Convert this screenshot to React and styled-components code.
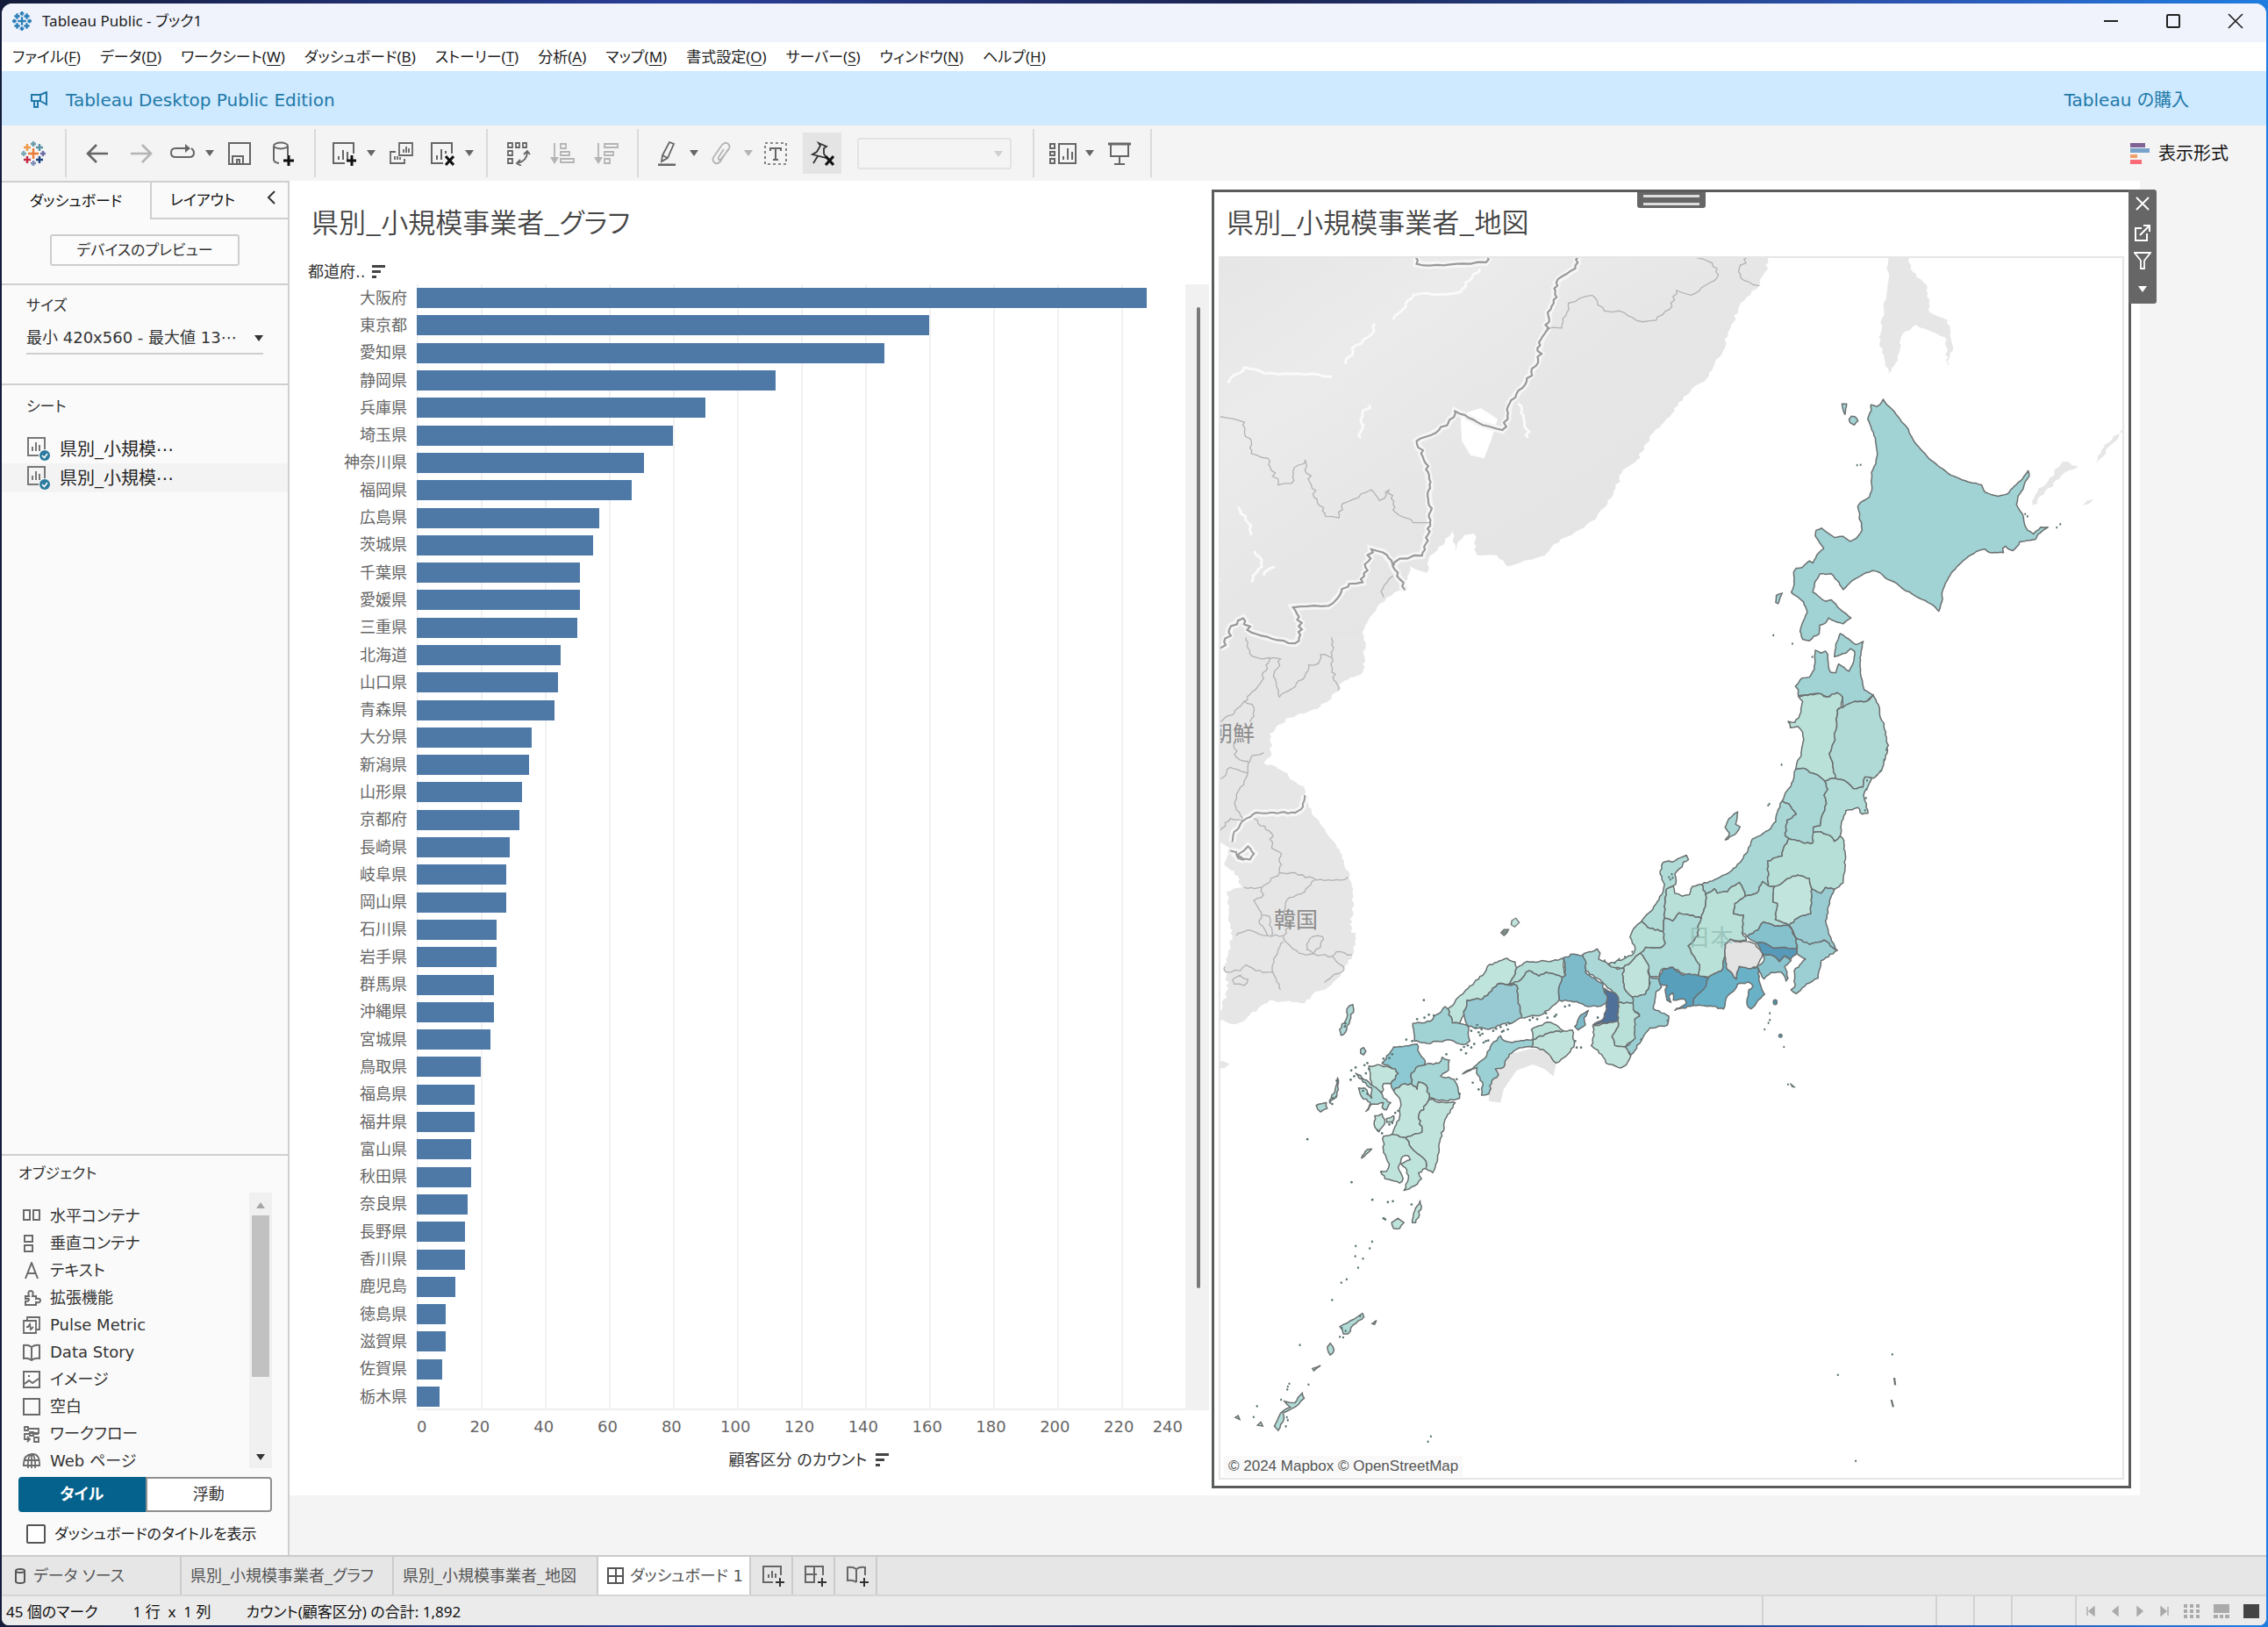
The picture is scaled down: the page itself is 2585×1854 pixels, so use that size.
import React from "react";
import styled, { createGlobalStyle, css } from "styled-components";

const uiFont = `"Noto Sans", "Noto Sans CJK JP", sans-serif`;
const paneFont = `"DejaVu Sans", "Noto Sans CJK JP", sans-serif`;
const line = "#cfcfcf";

const GlobalStyle = createGlobalStyle`
  *, *::before, *::after { box-sizing: border-box; }
  body { margin: 0; }
  button, input, select { font: inherit; color: inherit; font-feature-settings: inherit; }
  button { background: none; border: 0; padding: 0; }
  ul { list-style: none; margin: 0; padding: 0; }
  h2, h3, p { margin: 0; font-weight: 400; }
`;

/* ---------- window shell ---------- */

const Desktop = styled.div`
  min-height: 100vh;
  padding: 4px 2px 2px;
  display: flex;
  background: linear-gradient(90deg, #141c3a 0%, #2a3f9a 30%, #1b2450 55%, #2c56b4 85%, #1f7de0 100%);
  font-family: ${uiFont};
  font-feature-settings: "palt";
  font-size: 17px;
  line-height: 24px;
  color: #222;
`;

const Window = styled.div`
  flex: 1;
  min-width: 0;
  display: flex;
  flex-direction: column;
  border-radius: 12px 12px 8px 8px;
  overflow: hidden;
  background: #f4f4f4;
`;

const TitleBar = styled.header`
  height: 44px;
  display: flex;
  align-items: center;
  gap: 12px;
  padding: 0 12px 4px;
  background: #f0f3fb;
  color: #1b1b1b;
`;

const WindowControls = styled.div`
  margin-left: auto;
  display: flex;
`;

const WindowButton = styled.button`
  width: 71px;
  height: 40px;
  display: grid;
  place-items: center;
  &:last-child { margin-right: -12px; }
`;

const MenuBar = styled.nav`
  height: 33px;
  display: flex;
  align-items: center;
  gap: 22px;
  padding: 0 12px;
  background: #fff;
`;

const MenuItem = styled.button`
  white-space: nowrap;
  u { text-underline-offset: 3px; }
`;

const Banner = styled.div`
  height: 62px;
  display: flex;
  align-items: center;
  gap: 20px;
  padding: 3px 88px 0 33px;
  background: #cfe9ff;
  color: #2179a8;
  font-family: ${paneFont};
  font-size: 20px;
  a { margin-left: auto; color: inherit; text-decoration: none; }
`;

/* ---------- toolbar ---------- */

const Toolbar = styled.div`
  height: 63px;
  display: flex;
  align-items: center;
  background: #f4f4f4;
`;

const ToolGroup = styled.div`
  height: 55px;
  display: flex;
  align-items: center;
  padding: 0 ${(p) => p.$pad || 10}px;
  border-right: 2px solid #dadada;
`;

const Tool = styled.button`
  width: ${(p) => (p.$compact ? 44 : 50)}px;
  height: 47px;
  display: grid;
  place-items: center;
  color: ${(p) => (p.disabled ? "#b4b4b4" : "#666")};
  ${(p) => p.$active && css`background: #e4e4e4; margin: 0 18px 0 9px;`}
`;

const CaretButton = styled.button`
  width: 18px;
  height: 47px;
  display: grid;
  place-items: center;
  color: ${(p) => (p.disabled ? "#b4b4b4" : "#666")};
`;

const FitBox = styled.div`
  position: relative;
  width: 176px;
  margin-right: 14px;
  color: #d0d0d0;
  select {
    display: block;
    width: 100%;
    height: 36px;
    appearance: none;
    border: 2px solid #dcdcdc;
    border-radius: 3px;
    background: #f5f5f5;
  }
  svg { position: absolute; right: 10px; top: 15px; pointer-events: none; }
`;

const ShowMe = styled.button`
  margin-left: auto;
  margin-right: 43px;
  display: flex;
  align-items: center;
  gap: 10px;
  font-size: 20px;
  color: #111;
`;

/* ---------- sidebar ---------- */

const Body = styled.div`
  flex: 1;
  display: flex;
  min-height: 0;
`;

const Sidebar = styled.aside`
  width: 328px;
  flex: none;
  display: flex;
  flex-direction: column;
  background: #fafafa;
  border-top: 2px solid ${line};
  border-right: 2px solid ${line};
  font-family: ${paneFont};
  color: #333;
`;

const SideTabs = styled.div`
  height: 42px;
  display: flex;
`;

const SideTab = styled.button`
  width: ${(p) => (p.$current ? 169 : 118)}px;
  color: #111;
  ${(p) => !p.$current && css`border-left: 2px solid ${line}; border-bottom: 2px solid ${line};`}
`;

const CollapseButton = styled.button`
  flex: 1;
  padding-bottom: 2px;
  border-bottom: 2px solid ${line};
`;

const SideSection = styled.section`
  padding: ${(p) => p.$pad};
  border-bottom: ${(p) => (p.$last ? 0 : 2)}px solid ${line};
  flex: ${(p) => (p.$grow ? 1 : "none")};
`;

const SideHeading = styled.h3`
  font-size: 17px;
  padding: ${(p) => p.$pad};
`;

const PreviewButton = styled.button`
  display: block;
  width: 216px;
  height: 36px;
  margin: 0 auto;
  border: 2px solid #cdcdcd;
  border-radius: 3px;
  background: #fcfcfc;
`;

const SizeLabel = styled.label`
  display: block;
`;

const SizeBox = styled.div`
  position: relative;
  margin-top: 8px;
  font-size: 18px;
  select {
    display: block;
    width: 100%;
    height: 36px;
    padding: 0;
    appearance: none;
    border: 0;
    border-bottom: 2px solid ${line};
    background: transparent;
  }
  svg { position: absolute; right: 0; top: 14px; pointer-events: none; }
`;

const SheetRow = styled.li`
  height: 33px;
  display: flex;
  align-items: center;
  gap: 10px;
  padding-left: 28px;
  font-size: 20px;
  background: ${(p) => (p.$alt ? "#f3f3f3" : "transparent")};
  color: #222;
`;

const ObjectList = styled.div`
  height: 314px;
  display: flex;
  justify-content: space-between;
  overflow: hidden;
  font-size: 18px;
  ul { padding: 11px 0 0 5px; }
`;

const ObjectRow = styled.li`
  height: 31px;
  display: flex;
  align-items: center;
  gap: 10px;
  white-space: nowrap;
  svg { color: #6a6a6a; }
`;

const ScrollTrack = styled.div`
  width: 26px;
  display: flex;
  flex-direction: column;
  align-items: center;
  padding: 11px 0 9px;
  background: #f0f0f0;
  i { width: 20px; height: 184px; margin-top: 8px; background: #c1c1c1; }
  svg:first-child { color: #a5a5a5; }
  svg:last-child { margin-top: auto; }
`;

const Segmented = styled.div`
  display: flex;
  margin-top: 10px;
  font-size: 18px;
`;

const Segment = styled.button`
  flex: 1;
  height: 40px;
  border: 2px solid ${(p) => (p.$on ? "#04628c" : "#8f8f8f")};
  border-radius: ${(p) => (p.$on ? "4px 0 0 4px" : "0 4px 4px 0")};
  background: ${(p) => (p.$on ? "#04628c" : "#fff")};
  color: ${(p) => (p.$on ? "#fff" : "#333")};
  font-weight: ${(p) => (p.$on ? 700 : 400)};
`;

const CheckLabel = styled.label`
  display: flex;
  align-items: center;
  gap: 10px;
  padding: 13px 0 0 9px;
  color: #222;
  white-space: nowrap;
  input {
    appearance: none;
    width: 22px;
    height: 22px;
    margin: 0;
    border: 2px solid #555;
    border-radius: 2px;
    background: #fff;
  }
`;

/* ---------- dashboard ---------- */

const Work = styled.main`
  flex: 1;
  min-width: 0;
  display: flex;
  padding: 0 144px 68px 0;
  background: #f4f4f4;
`;

const Board = styled.div`
  flex: 1;
  display: grid;
  grid-template-columns: minmax(0, 1fr) minmax(0, 1fr);
  gap: 3px;
  padding: 10px 10px 8px 0;
  background: #fff;
  font-size: 18px;
`;

const Zone = styled.section`
  display: flex;
  flex-direction: column;
  min-height: 0;
`;

const SheetTitle = styled.h2`
  font-family: "Noto Sans CJK JP", sans-serif;
  font-size: 31px;
  font-weight: 350;
  line-height: 44px;
  color: #444;
  padding: ${(p) => p.$pad};
`;

const FieldHeader = styled.div`
  display: flex;
  align-items: center;
  gap: 6px;
  height: 28px;
  padding-left: 21px;
  font-family: ${paneFont};
  color: #333;
`;

const ChartRow = styled.div`
  flex: 1;
  display: flex;
  min-height: 0;
`;

const Plot = styled.div`
  flex: 1;
  display: flex;
  flex-direction: column;
  background:
    linear-gradient(#efefef, #efefef) right bottom / calc(100% - 145px) 2px no-repeat,
    repeating-linear-gradient(90deg, #f1f1f1 0 2px, transparent 2px 8.316%) right top / calc(100% - 145px) 100% no-repeat;
`;

const BarRow = styled.div`
  flex: 1;
  display: grid;
  grid-template-columns: 145px 1fr;
  align-items: center;
  line-height: 24px;
  span {
    padding-right: 11px;
    text-align: right;
    color: #666;
    font-family: ${paneFont};
    font-feature-settings: normal;
  }
`;

const Bar = styled.div`
  height: 23px;
  background: #4e79a7;
`;

const ChartScroll = styled.div`
  width: 25px;
  background: #f1f1f1;
  display: flex;
  justify-content: center;
  padding: 26px 0 139px;
  &::before { content: ""; width: 4px; border-radius: 2px; background: #7a7a7a; }
`;

const Ticks = styled.div`
  display: grid;
  grid-template-columns: 1fr repeat(11, 2fr) 1fr;
  margin: 7px 30px 0 144px;
  font-family: ${paneFont};
  color: #666;
  text-align: center;
  span:first-child { text-align: left; padding-left: 1px; }
  span:last-child { text-align: right; }
`;

const AxisTitle = styled.div`
  display: flex;
  align-items: center;
  justify-content: center;
  gap: 8px;
  margin: 14px 28px 20px 164px;
  font-family: ${paneFont};
  color: #333;
`;

const MapZone = styled(Zone)`
  position: relative;
  border: 3px solid #5a5c5c;
  padding: 0 5px 7px;
`;

const Grip = styled.div`
  position: absolute;
  top: 0;
  left: 50%;
  width: 78px;
  height: 18px;
  margin-left: -39px;
  padding: 3px 7px;
  display: flex;
  flex-direction: column;
  justify-content: space-between;
  background: #666;
  border-radius: 0 0 3px 3px;
  &::before, &::after { content: ""; height: 3px; background: #ddd; }
`;

const ZoneTools = styled.div`
  position: absolute;
  top: -3px;
  left: 100%;
  width: 32px;
  height: 130px;
  display: flex;
  flex-direction: column;
  background: #666;
  border-radius: 0 3px 3px 0;
  color: #fff;
  button { flex: 1; display: grid; place-items: center; }
`;

const MapFrame = styled.div`
  flex: 1;
  position: relative;
  border: 2px solid #e6e6e6;
  overflow: hidden;
  > svg { position: absolute; inset: 0; width: 100%; height: 100%; }
`;

const Attribution = styled.p`
  position: absolute;
  left: 4px;
  bottom: 1px;
  padding: 0 5px;
  background: #f9f9f9;
  font-family: "Liberation Sans", Arial, sans-serif;
  font-size: 17px;
  color: #555;
`;

/* ---------- bottom bars ---------- */

const TabStrip = styled.div`
  height: 47px;
  display: flex;
  background: #e6e6e6;
  border-top: 2px solid #cbcbcb;
  border-bottom: 2px solid #d6d6d6;
  font-family: ${paneFont};
  font-size: 18px;
`;

const BookTab = styled.button`
  min-width: ${(p) => p.$min}px;
  display: flex;
  align-items: center;
  gap: 7px;
  padding: 0 7px 0 ${(p) => (p.$icon ? 13 : 10)}px;
  border-right: 2px solid #cbcbcb;
  background: ${(p) => (p.$current ? "#fff" : "transparent")};
  color: #555;
  white-space: nowrap;
`;

const StatusBar = styled.footer`
  height: 33px;
  display: flex;
  align-items: center;
  gap: 40px;
  padding: 2px 8px 0 5px;
  background: #ebebeb;
  color: #111;
  white-space: pre;
`;

const StatusCells = styled.div`
  margin: -2px 0 0 auto;
  align-self: stretch;
  display: flex;
`;

const StatusCell = styled.div`
  width: ${(p) => p.$w}px;
  border-left: 2px solid #d2d2d2;
  display: flex;
  align-items: center;
  justify-content: space-between;
  padding: ${(p) => p.$pad || 0};
`;

/* ---------- icons ---------- */

const Svg = ({ w = 28, h = w, vb, children, ...rest }) => (
  <svg width={w} height={h} viewBox={vb || `0 0 ${w} ${h}`} fill="none" stroke="currentColor" strokeWidth="2" aria-hidden="true" {...rest}>
    {children}
  </svg>
);

const Caret = ({ up, size = 10 }) => (
  <Svg w={size} h={7} vb="0 0 10 7" stroke="none">
    <path d={up ? "M0 7L5 0L10 7Z" : "M0 0H10L5 7Z"} fill="currentColor" />
  </Svg>
);

const plus = (x, y, r) => `M${x - r} ${y}h${r * 2}M${x} ${y - r}v${r * 2}`;

const Logo = ({ mono }) => {
  const marks = [
    [14, 14, 6, "#eb7b35"],
    [14, 3, 3, "#6b9aa8"],
    [14, 25, 3, "#7d8cb8"],
    [3, 14, 3, "#7aa6b5"],
    [25, 14, 3, "#6c6ea6"],
    [7, 7, 4, "#eb9a4b"],
    [21, 7, 4, "#5a93a3"],
    [7, 21, 4, "#c72b45"],
    [21, 21, 4, "#1f447e"],
  ];
  return (
    <Svg w={mono ? 22 : 28} vb="0 0 28 28">
      {marks.map(([x, y, r, c]) => (
        <path key={`${x}-${y}`} d={plus(x, y, r)} stroke={mono ? "#2b7fb8" : c} strokeWidth={mono ? 3 : 2.4} />
      ))}
    </Svg>
  );
};

const Megaphone = () => (
  <Svg w={20} h={20}>
    <path d="M1 4H11V11H1ZM4 11V18H8V11M11 4L18 1V15L11 11" />
  </Svg>
);

const icons = {
  back: <Svg><path d="M26 14H3M13 4L3 14L13 24" strokeWidth="2.6" /></Svg>,
  forward: <Svg><path d="M2 14H25M15 4L25 14L15 24" strokeWidth="2.6" /></Svg>,
  redo: <Svg><path d="M20 8H6Q1 8 1 13T6 18H22Q27 18 27 13Q27 10 24 8" /><path d="M17 3L23 8L17 13Z" fill="currentColor" stroke="none" /></Svg>,
  save: <Svg><path d="M2 2H26V26H2ZM6 26V17H18V26M11 26V21H14V26" /></Svg>,
  addData: <Svg><path d="M3 6V21Q3 24 9 25M19 6V16" /><ellipse cx="11" cy="5" rx="8" ry="3.4" /><path d={plus(20, 22, 6)} stroke="#111" strokeWidth="3" /></Svg>,
  newSheet: <Svg><path d="M15 25H2V2H25V14M8 21V17M13 21V10M18 21V12" /><path d={plus(23, 22, 6)} stroke="#111" strokeWidth="3" /></Svg>,
  duplicate: <Svg><path d="M12 2H27V16H12ZM17 13V9M20 13V6M23 13V8M8 12H2V25H18V20M7 21V17M10 21V17M13 21V18" strokeWidth="1.8" /></Svg>,
  clear: <Svg><path d="M15 25H2V2H25V14M8 21V16M13 21V9M18 14V11" /><path d="M18 17L27 27M27 17L18 27" stroke="#111" strokeWidth="3" /></Svg>,
  swap: <Svg><path d="M2 2h5v5h-5zM11 2h4v5h-4zM19 2h4v5h-4zM2 11h5v5h-5zM2 20h5v5h-5zM24 12Q24 22 13 25M20 15L24 11L27 15M16 21L12 25L17 28" strokeWidth="1.8" /></Svg>,
  sortAsc: <Svg><path d="M5 2V24M12 3h6v5h-6zM12 12h10v4h-10zM12 20h15v4h-15z" strokeWidth="1.8" /><path d="M0 18H10L5 26Z" fill="currentColor" stroke="none" /></Svg>,
  sortDesc: <Svg><path d="M5 2V24M12 3h15v4h-15zM12 12h10v4h-10zM12 20h6v5h-6z" strokeWidth="1.8" /><path d="M0 18H10L5 26Z" fill="currentColor" stroke="none" /></Svg>,
  highlight: <Svg><path d="M17 1L22 3L15 19L8 23L9 16ZM9 16L15 19" strokeWidth="1.8" /><path d="M4 27H24" strokeWidth="3" /></Svg>,
  clip: <Svg><path d="M22 9L13 23Q9 27 6 24T6 17L15 4Q19 0 22 3T22 10L13 21Q10 22 11 18L17 9" strokeWidth="1.8" /></Svg>,
  label: <Svg><path d="M2 2H26V26H2Z" strokeDasharray="3 3" strokeWidth="1.6" /><path d="M8 11V8H20V11M14 8V21M11 21H17" /></Svg>,
  pin: <Svg><path d="M10 2L19 6L16 8V14L19 19L3 15L8 12L12 5ZM9 17L4 25" stroke="#333" strokeWidth="1.8" /><path d="M18 17L27 27M27 17L18 27" stroke="#111" strokeWidth="3" /></Svg>,
  cards: <Svg w={32} h={28}><path d="M2 3h5v5h-5zM2 12h5v4h-5zM2 20h5v5h-5zM12 3H31V25H12ZM17 21V17M22 21V8M27 21V12" /></Svg>,
  present: <Svg><path d="M1 3H27" strokeWidth="3" /><path d="M4 3V17H24V3M14 17V26M8 26H20" /></Svg>,
};

const SortMark = () => (
  <Svg w={17} h={16} stroke="none">
    <path d="M2 0H17V3H2ZM2 6H12V9H2ZM2 12H7V15H2Z" fill="#444" />
  </Svg>
);

const SheetIcon = () => (
  <Svg w={28} h={28}>
    <path d="M14 21H2V1H21V14M7 16V11M11 16V6M15 16V9" stroke="#777" />
    <circle cx="21" cy="21" r="6" fill="#2b7b9e" stroke="none" />
    <path d="M18 21L20.5 23.5L24 19" stroke="#fff" strokeWidth="1.6" />
  </Svg>
);

const objectIcons = {
  h: <path d="M1 3H8V14H1ZM12 3H19V14H12Z" />,
  v: <path d="M2 1H11V8H2ZM2 12H11V19H2Z" />,
  text: <path d="M3 19L10 1L17 19M6 13H14" />,
  ext: <path d="M3 8H7Q5 2 9 2T11 8H15V11Q20 10 20 13T15 15V18H3V14Q7 14 7 12T3 11Z" />,
  pulse: <path d="M5 4V1H19V15H16M1 5H15V19H1ZM4 12H6L8 9L9 15L12 12" strokeWidth="1.8" />,
  story: <path d="M10 4Q6 1 1 2V17Q6 16 10 19Q14 16 19 17V2Q14 1 10 4ZM10 4V19" />,
  image: <path d="M1 1H19V19H1ZM2 15L7 11L11 14L18 9M6 6H8" />,
  blank: <path d="M1 1H19V19H1Z" />,
  flow: <path d="M2 2h4v4h-4zM6 4H18V9H9M8 8h4v4h-4zM8 10H2V16H7M5 13L8 16L5 19M13 14h5v5h-5zM13 10H18" strokeWidth="1.8" />,
  web: <path d="M1 16Q0 3 10 2T19 16M6 18Q5 4 10 2Q15 4 14 18M10 2V18M1 9H19M1 15H19" strokeWidth="1.8" />,
};

/* ---------- data ---------- */

const menus = [
  ["ファイル", "F"], ["データ", "D"], ["ワークシート", "W"], ["ダッシュボード", "B"], ["ストーリー", "T"], ["分析", "A"],
  ["マップ", "M"], ["書式設定", "O"], ["サーバー", "S"], ["ウィンドウ", "N"], ["ヘルプ", "H"],
];

const objects = [
  ["h", "水平コンテナ"], ["v", "垂直コンテナ"], ["text", "テキスト"], ["ext", "拡張機能"], ["pulse", "Pulse Metric"],
  ["story", "Data Story"], ["image", "イメージ"], ["blank", "空白"], ["flow", "ワークフロー"], ["web", "Web ページ"],
];

const bars = [
  ["大阪府", 228], ["東京都", 160], ["愛知県", 146], ["静岡県", 112], ["兵庫県", 90], ["埼玉県", 80], ["神奈川県", 71],
  ["福岡県", 67], ["広島県", 57], ["茨城県", 55], ["千葉県", 51], ["愛媛県", 51], ["三重県", 50], ["北海道", 45],
  ["山口県", 44], ["青森県", 43], ["大分県", 36], ["新潟県", 35], ["山形県", 33], ["京都府", 32], ["長崎県", 29],
  ["岐阜県", 28], ["岡山県", 28], ["石川県", 25], ["岩手県", 25], ["群馬県", 24], ["沖縄県", 24], ["宮城県", 23],
  ["鳥取県", 20], ["福島県", 18], ["福井県", 18], ["富山県", 17], ["秋田県", 17], ["奈良県", 16], ["長野県", 15],
  ["香川県", 15], ["鹿児島", 12], ["徳島県", 9], ["滋賀県", 9], ["佐賀県", 8], ["栃木県", 7],
];
const axisMax = 240.5;
const tickValues = Array.from({ length: 13 }, (_, i) => i * 20);

/* Map geometry: each region lists its fill and its outline points. */
const north = [
  ["#a1d2d4", "737,78 750,97 775,120 800,155 823,180 830,200 850,232 895,282 940,315 960,332 1000,350 1035,362 1073,370 1085,395 1105,403 1130,409 1160,402 1185,375 1213,350 1232,322 1236,340 1222,360 1215,385 1198,408 1192,437 1205,460 1213,470 1220,505 1230,525 1250,538 1275,515 1300,515 1280,528 1265,540 1258,556 1230,560 1203,565 1200,575 1180,595 1165,590 1155,580 1145,587 1148,602 1100,601 1085,590 1055,598 1020,622 975,665 950,705 938,738 940,760 927,802 905,780 880,765 850,752 800,722 775,702 750,692 725,670 700,663 670,675 640,692 620,708 600,728 580,697 560,674 520,675 505,700 497,737 540,768 560,763 590,795 627,825 600,845 570,835 550,825 540,842 520,850 518,880 500,887 485,903 462,898 453,870 460,845 478,805 465,770 440,750 423,737 433,710 431,668 440,655 460,653 485,630 497,637 510,610 534,588 505,545 508,525 527,518 570,550 600,546 625,563 645,553 665,525 663,500 655,485 657,470 650,445 660,430 690,412 698,390 697,328 712,298 717,262 710,210 684,145 697,115 695,97 715,103 727,95"],
  ["#a1d2d4", "596,94 612,94 606,130"],
  ["#a1d2d4", "620,147 628,136 640,137 651,152 638,166 624,158"],
  ["#a1d2d4", "392,740 372,748 370,772 378,776 385,755"],
  ["#a1d2d4", "447,1092 447,1070 437,1058 460,1030 485,1027 502,1000 505,935 525,945 540,938 548,950 550,990 557,1010 575,1012 585,982 620,1007 637,970 640,940 625,930 610,945 570,957 575,915 590,878 620,897 645,916 669,905 658,960 660,1020 672,1070 703,1088 680,1110 640,1110 600,1130 598,1095 580,1080 545,1095 515,1083 470,1088"],
];

const central = [
  ["#b9e1d8", "147,-18 170,-22 215,-27 245,-15 280,-30 298,-15 295,20 280,30"],
  ["#b9e1d8", "747,-18 770,-22 815,-27 845,-15 880,-30 898,-15 895,20 880,30 878,90 870,110 873,130 853,178 865,210 873,262 838,272 820,257 762,228 738,232 742,210 757,185 766,130 762,105 745,85 720,90 712,68 735,72 752,45 762,0"],
  ["#b0dad6", "900,20 940,0 980,0 1003,-22 1020,10 1025,45 1040,75 1045,115 1055,150 1045,185 1032,235 1005,262 975,258 968,292 935,298 912,275 873,262 865,210 853,178 873,130 870,110 878,90 880,30"],
  ["#a9d7d6", "738,232 762,228 820,257 838,272 848,300 835,320 843,350 828,390 822,425 798,430 797,483 770,485 715,468 703,460 708,405 740,385 715,350 692,340 700,320 722,290"],
  ["#b1dcd8", "838,272 873,262 912,275 935,298 968,292 975,258 998,262 985,290 975,305 970,320 980,350 985,382 965,385 950,362 910,372 895,410 890,460 870,478 855,458 815,445 798,447 798,430 822,425 828,390 843,350 835,320 848,300"],
  ["#a9d7d6", "692,340 715,350 740,385 708,405 703,460 715,468 697,500 692,528 642,545 645,630 625,615 605,655 565,665 558,640 545,618 520,632 505,650 470,655 460,640 430,660 418,625 470,605 510,585 548,550 575,510 590,470 645,440 670,410 678,370"],
  ["#a9d7d6", "540,377 533,420 548,428 530,455 497,473 512,450 497,430 510,400"],
  ["#b6e0d7", "715,468 770,485 797,483 798,447 815,445 855,458 870,478 890,460 903,475 908,540 900,620 870,642 840,635 825,655 793,640 785,605 745,593 710,605 690,622 665,632 645,630 642,545 692,528 697,500"],
  ["#c1e5dc", "665,632 690,622 710,605 745,593 785,605 793,640 790,725 745,740 715,765 668,745 675,690 660,685 662,650"],
  ["#98cbd2", "793,640 825,655 840,635 870,642 850,700 840,750 850,790 880,850 835,815 785,830 745,812 715,765 745,740 790,725"],
  ["#b0dbd7", "565,665 605,655 625,615 645,630 665,632 662,650 660,685 675,690 668,745 715,765 668,768 628,753 610,780 572,803 555,790 560,730 525,725 530,690"],
  ["#84c1cd", "572,803 610,780 628,753 668,768 715,765 740,810 742,845 700,840 665,843 630,825 605,825"],
  ["#9bcfd3", "715,765 745,812 785,830 835,815 880,850 825,885 815,945 775,965 740,998 722,985 735,975 733,920 772,880 742,862 740,810"],
  ["#8ac5cf", "625,862 668,872 682,888 700,868 722,885 700,905 712,945 705,955 690,925 655,925 630,948 612,915 605,905 630,885"],
  ["#5799b8", "605,825 630,825 665,843 700,840 742,845 738,865 720,882 700,868 682,888 668,872 625,862"],
  ["#b9e1d8", "430,660 460,640 470,655 505,650 520,632 545,618 558,640 565,665 530,690 525,725 560,730 555,790 570,815 540,818 515,812 497,830 497,870 485,920 440,942 405,938 410,900 370,835 405,800 403,770 415,740 430,690"],
  ["#68b1c6", "497,870 505,915 535,948 545,905 575,912 608,908 615,960 632,1000 585,1050 572,1035 578,985 592,972 575,958 540,965 530,985 500,1015 492,1050 445,1040 388,1038 390,1015 440,942 485,920"],
  ["#e3e3e3", "497,830 515,812 530,820 560,818 600,828 625,862 605,908 575,912 545,905 535,948 505,915 497,870"],
  ["#b8e0d8", "320,630 325,655 350,665 375,660 385,632 418,625 430,660 430,690 415,740 340,722 318,750 290,740 292,680 297,640"],
  ["#b0dbd7", "365,525 372,540 355,548 350,565 325,590 328,625 297,640 292,680 290,740 285,785 240,775 212,750 250,710 285,650 290,625 275,590 285,550 325,545"],
  ["#b6e0d8", "212,750 240,775 285,785 293,825 275,842 225,840 207,860 150,910 110,912 100,895 150,880 185,860 190,845 172,805 185,775"],
  ["#add9d6", "285,785 290,740 318,750 340,722 415,740 403,770 405,800 370,835 410,900 405,938 370,940 318,908 280,915 272,940 240,940 235,900 207,860 225,840 275,842 293,825"],
  ["#c0e4dc", "150,910 207,860 235,900 238,970 225,1000 180,1010 155,985 148,940"],
  ["#9bcfd3", "240,940 272,950 280,975 262,990 252,1050 305,1075 300,1105 240,1115 210,1160 175,1207 155,1185 185,1150 188,1080 205,1070 182,1050 180,1010 225,1000 238,970"],
  ["#589fbc", "272,940 285,915 318,908 350,935 375,930 440,942 430,975 390,1015 388,1038 325,1055 365,1030 360,1017 320,1020 318,995 305,1005 312,1028 298,1020 292,985 300,970 275,965"],
  ["#abd8d6", "10,865 60,845 70,860 65,880 90,890 100,900 130,915 150,910 148,940 155,985 180,1010 182,1030 130,1030 118,998 90,970 60,945 20,920 15,895"],
  ["#b8e0d8", "130,1030 182,1030 188,1060 205,1075 188,1085 190,1150 155,1180 120,1175 110,1145 132,1110 130,1090"],
  ["#c1e5dc", "45,1110 85,1098 130,1090 132,1110 110,1145 120,1175 155,1180 175,1210 160,1240 140,1252 90,1235 75,1205 40,1175 50,1140"],
  ["#4e7099", "85,980 100,990 120,995 132,1010 130,1090 85,1098 45,1105 80,1085 92,1050 90,1010"],
].slice(1);

const west = [
  ["#7dbbcb", "905,95 940,83 970,88 980,105 980,145 1010,165 1040,185 1045,215 1055,235 1050,250 1020,262 990,262 950,245 890,240 888,205 900,162 912,155"],
  ["#7dbbcb", "990,275 975,300 980,325 955,342 943,330 965,290"],
  ["#b4ddd8", "745,130 780,108 850,108 903,97 912,155 900,162 870,150 845,145 820,158 785,140 760,170 720,185 740,150"],
  ["#bfe4db", "645,125 712,97 740,110 745,130 740,150 720,185 680,185 650,215 630,235 575,240 565,290 550,320 525,318 510,270 560,220 600,180 640,140"],
  ["#add9d6", "720,185 760,170 785,140 820,158 845,145 870,150 900,162 888,205 890,240 860,268 830,290 790,295 762,300 750,240 745,190"],
  ["#97cad2", "680,185 745,190 750,240 762,300 735,315 690,325 650,340 580,330 565,290 575,240 630,235 650,215"],
  ["#a1d3d5", "390,320 450,312 500,262 510,270 525,318 550,320 580,330 585,380 560,392 510,375 440,388 395,380"],
  ["#b9e1d8", "795,340 850,315 880,325 905,345 860,350 800,375"],
  ["#c0e4db", "800,375 860,350 905,345 935,342 940,400 915,430 880,455 855,425 835,408 797,400"],
  ["#9bd0d4", "690,362 705,380 730,385 800,375 797,400 745,408 720,425 700,470 672,475 683,495 660,515 650,560 625,565 630,530 608,490 610,470 560,492 610,460 640,435 655,400"],
  ["#8cc9d2", "325,400 405,390 412,420 433,450 430,462 385,490 385,525 350,530 325,550 315,525 340,490 330,475 285,455"],
  ["#c1e5dc", "240,465 280,462 330,475 340,490 315,525 290,525 285,555 250,530 245,490"],
  ["#add9d6", "195,490 240,520 285,560 290,575 315,590 300,615 285,605 290,590 250,595 230,620 245,590 215,570 205,540 225,540 250,575 250,540 220,520"],
  ["#a6d6d6", "385,490 410,465 430,462 480,455 490,435 515,445 512,480 485,500 530,510 545,540 550,575 510,585 470,580 447,572 435,530 410,520 405,545 385,525"],
  ["#c1e5dc", "325,550 350,530 385,525 405,545 410,520 435,530 447,572 440,590 410,635 422,690 365,710 320,698 345,640 350,600 345,575"],
  ["#c1e5dc", "260,635 285,628 295,660 275,690 258,665"],
  ["#c1e5dc", "300,645 325,635 322,655 302,658"],
  ["#c0e4dc", "447,578 480,590 535,590 505,640 480,730 475,780 458,830 435,815 435,790 395,755 365,710 422,690 410,635 440,590"],
  ["#bde3db", "290,705 320,698 365,710 395,755 435,790 435,815 410,830 420,850 395,875 360,890 375,850 370,820 350,800 382,785 375,772 355,775 340,810 357,850 345,865 295,850 280,825 300,825 310,800 290,760"],
  ["#add9d6", "185,255 188,270 175,310 160,350 145,360 140,340 165,300 165,270"],
  ["#add9d6", "212,408 222,402 230,415 222,427 212,422"],
  ["#add9d6", "60,600 95,590 98,610 75,622"],
  ["#add9d6", "105,585 125,545 133,505 136,545 125,575"],
  ["#bde3db", "415,925 420,945 400,1000 388,1000 400,950"],
  ["#bde3db", "318,1000 340,985 360,1000 345,1020 325,1020"],
  ["#bde3db", "215,780 235,750 250,748 232,765"],
];

const southIslands = [
  ["#b0dbd7", "315,350 318,362 295,390 285,420 275,420 268,395 290,375"],
  ["#b0dbd7", "248,452 256,475 248,492 242,465"],
  ["#b0dbd7", "211,538 228,528 214,546"],
  ["#b0dbd7", "190,622 194,640 175,670 150,690 152,710 140,750 132,735 145,690 165,670 153,650 175,655"],
  ["#b0dbd7", "335,385 344,374 340,388"],
  ["#b0dbd7", "51,705 57,699 60,712"],
  ["#b0dbd7", "97,732 104,721 108,735"],
];

const kochi = "720,425 797,405 835,410 880,455 870,500 840,475 800,460 745,480 700,545 690,590 650,585 650,560 660,515 683,495 672,475 700,470";

const specks = {
  north: "648,303 660,302 362,884 427,913 1222,470 1230,478 1330,516 1342,505 495,958",
  central: "690,216 648,350 644,355 305,600 315,590 318,602 310,608 650,1065 650,1088 645,1098 632,1120 698,1180 712,1308 62,1080 85,885 120,893 135,880 155,872 180,855 980,300 978,330 975,372 982,270 1048,165 1040,200 1028,238 300,1090 210,1155",
  west: "428,240 305,930 322,927 252,922 386,938 181,862 30,715 290,985 296,989 590,345 605,335 615,350 625,340 628,355 610,325 620,360 675,338 690,332 700,345 710,325 715,340 695,348 665,345 720,320 800,300 815,305 790,308 845,285 850,300 880,290 875,296 910,262 925,258 1022,300 565,400 578,395 590,402 600,390 555,410 572,422 640,380 632,385 648,378 505,425 445,290 462,292 430,300 405,305 388,380 368,375 320,425 310,438 290,440 180,480 195,470 190,500 178,512 225,462 235,455 240,475 230,490 220,550 235,560 130,515 128,570 118,575 108,590 115,595 270,685 285,695 310,665 320,660 330,625 340,618 595,522 615,545 540,510 550,560 950,402 945,380 965,402 160,320 158,330",
  south: "335,105 330,128 316,163 306,194 301,120 300,155 271,245 282,234 252,304 185,458 163,590 160,600 159,610 203,593 146,645 96,667 89,704 158,705 160,715 156,736 457,770 451,788 268,430 275,432 272,400 280,410 310,360 1302,560 1415,490 1339,854 360,26",
};

const hash = (a, b) => {
  const s = Math.sin(a * 12.9898 + b * 78.233) * 43758.5453;
  return s - Math.floor(s) - 0.5;
};

/* Breaks long straight edges into a coastline-like jitter; both sides of a shared edge get the same shape. */
const roughen = (text, amp = 5, closed = true) => {
  const pts = text.split(" ").map((p) => p.split(",").map(Number));
  const out = [];
  const count = closed ? pts.length : pts.length - 1;
  for (let i = 0; i < count; i += 1) {
    const a = pts[i];
    const b = pts[(i + 1) % pts.length];
    out.push(a);
    const dx = b[0] - a[0];
    const dy = b[1] - a[1];
    const len = Math.hypot(dx, dy);
    const n = Math.floor(len / 9);
    const flip = a[0] > b[0] || (a[0] === b[0] && a[1] > b[1]);
    for (let k = 1; k < n; k += 1) {
      const t = k / n;
      const key = flip ? n - k : k;
      const h = hash(a[0] + b[0] + key * 7, a[1] + b[1]) * amp * (flip ? -1 : 1);
      out.push([a[0] + dx * t - (dy / len) * h, a[1] + dy * t + (dx / len) * h]);
    }
  }
  if (!closed) out.push(pts[pts.length - 1]);
  return out.map((p) => p.map((v) => v.toFixed(1)).join(",")).join(" ");
};

const Regions = ({ list, amp }) =>
  list.map(([fill, pts]) => <polygon key={pts} points={roughen(pts, amp)} fill={fill} vectorEffect="non-scaling-stroke" />);

const Specks = ({ points, rx = 3, ry = 3 }) => (
  <g fill="#5b7272" stroke="none">
    {points.split(" ").map((p) => {
      const [x, y] = p.split(",");
      return <ellipse key={p} cx={x} cy={y} rx={rx} ry={ry + 1} />;
    })}
  </g>
);

const Lines = ({ list, amp = 5, ...rest }) => (
  <g fill="none" {...rest}>
    {list.map((pts) => <polyline key={pts} points={roughen(pts, amp, false)} vectorEffect="non-scaling-stroke" />)}
  </g>
);

const upperBorder = [
  "545,262 540,300 512,345 508,400 500,450 497,500 488,545 485,590 475,630 462,680 445,720 440,780 432,815 395,790 362,755 350,800 305,850 318,920 325,1000 325,1110 313,1215 280,1225 270,1250 280,1290 288,1325",
  "270,1250 255,1205 238,1195 225,1300 205,1305 175,1375 122,1380 135,1450 125,1495 90,1480 60,1460 48,1415 30,1440 22,1500 14,1510",
  "303,262 305,285 345,290 385,285 408,280 410,262",
];
const upperThin = [
  "14,772 50,790 60,890 85,905 100,990 120,985 122,945 140,912 150,1000 170,1090 190,1095 195,1050 238,1005 250,1040 265,1005 270,1070 300,1110 325,1110",
  "497,492 520,490 530,410 565,385 583,435 605,435 640,470 660,465 680,430 690,370 712,385 750,330 750,300 730,270 710,262",
  "797,262 783,300 785,330 813,355",
  "270,1280 255,1320 256,1348",
];
const rivers = [
  "398,300 370,375 300,385 280,440 270,462",
  "243,475 238,510 215,545 200,605",
  "25,665 50,615 80,635 130,635 180,645",
  "235,735 225,770 222,840",
  "455,730 465,790 470,840",
  "40,1060 55,1110 60,1150",
  "65,1200 75,1240 60,1300",
  "95,1250 78,1278",
];
const koreaThin = [
  "295,0 312,60 308,180 325,262",
  "90,80 105,145 135,155 150,150 130,230 85,300 105,310 110,350 100,370",
  "85,300 60,340 25,370",
  "150,155 178,155 160,215 175,285 215,250 240,215 250,175 275,170 280,140 308,150",
  "60,440 65,490 95,505 92,555 65,620 65,670 82,700",
  "98,510 105,485 135,475",
  "25,565 50,525 95,545",
  "25,740 50,700 82,705",
  "110,700 155,750 155,800 180,820 175,885 130,935 85,935",
  "175,885 215,885 270,910 330,910 350,900",
  "265,910 240,950 200,970 185,1020 200,1060 185,1100",
  "130,935 135,960 110,980 130,1030 125,1060 145,1100 185,1100",
  "130,1030 150,1035 155,1100",
  "65,1100 95,1080 145,1100",
  "185,1100 190,1120 225,1160 310,1170 320,1155 360,1165",
  "310,1170 340,1215 290,1260",
  "185,1120 160,1180 160,1230 178,1285",
  "35,1205 40,1225 75,1220 90,1200 115,1220 160,1225",
  "245,1150 250,1120 260,1103 285,1103 280,1140 262,1160 245,1145",
  "55,1250 75,1235 95,1250 85,1270 60,1265 55,1250",
];
const koreaBorder = [
  "240,620 235,660 215,680 115,680 85,705 60,745 55,780",
  "50,810 65,815 70,835 85,842 68,825 95,795 110,820 100,840 80,838",
];

const JapanMap = () => (
  <svg viewBox="1391 294 1027 1391" preserveAspectRatio="xMidYMid slice" role="img" aria-label="県別の地図">
    <defs>
      <linearGradient id="relief" x1="0" y1="0" x2="1" y2="1">
        <stop offset="0" stopColor="#e6e6e6" />
        <stop offset="0.25" stopColor="#ebebeb" />
        <stop offset="0.5" stopColor="#e6e6e6" />
        <stop offset="1" stopColor="#e2e2e2" />
      </linearGradient>
    </defs>
    <g transform="translate(1380 700) scale(0.44643 0.33333)">
      <polygon fill="#e6e6e6" points={roughen("10,-20 408,-20 400,30 384,60 396,100 388,200 335,235 325,265 272,325 200,355 150,410 155,480 135,510 180,535 240,600 250,660 280,720 320,790 350,880 355,910 363,960 358,1090 372,1090 365,1160 340,1220 300,1275 270,1290 240,1330 190,1325 150,1320 100,1370 70,1400 40,1395 10,1385", 9)} />
      <polygon fill="#fff" points={roughen("10,775 50,800 35,860 60,880 80,935 40,950 45,1010 55,1100 45,1150 35,1200 45,1280 30,1340 10,1400", 9)} />
      <polygon fill="#e6e6e6" points="10,1535 32,1528 48,1538 35,1552 10,1555" />
      <Lines list={koreaBorder} stroke="#f6f6f6" strokeWidth="8" />
      <Lines list={koreaThin} stroke="#b2b2b2" strokeWidth="1.3" amp={9} />
      <Lines list={koreaBorder} stroke="#999" strokeWidth="2" />
    </g>
    <g transform="translate(1380 200) scale(0.7685 0.35714)">
      <polygon fill="url(#relief)" points={roughen("10,250 829,250 822,310 812,355 783,420 770,490 755,580 735,650 700,710 675,780 650,840 632,910 612,940 600,1000 588,1050 570,1100 540,1140 508,1180 495,1215 465,1230 440,1250 425,1215 395,1215 390,1145 375,1150 362,1200 358,1135 345,1180 325,1215 320,1270 295,1250 288,1320 260,1350 245,1390 228,1430 222,1475 14,1475", 6)} />
      <g fill="#e6e6e6">
        <polygon points={roughen("1005,250 1032,250 1040,310 1062,360 1065,440 1092,465 1100,550 1092,610 1088,520 1045,480 1025,510 1015,600 1004,635 990,520 1000,400", 5)} />
        <polygon points={roughen("1360,800 1335,860 1310,925 1325,860", 6)} />
        <polygon points={roughen("1262,915 1285,930 1260,960 1235,1020 1218,1055 1222,1020 1250,950", 8)} />
        <polygon points="1292,1055 1298,1040 1308,1035 1302,1050" />
      </g>
      <polygon fill="#fff" points="370,765 400,745 425,780 415,850 405,905 385,895 372,850" />
      <Lines list={rivers} stroke="#fafafa" strokeWidth="3" amp={8} />
      <Lines list={upperBorder} stroke="#f6f6f6" strokeWidth="8" />
      <Lines list={upperThin} stroke="#b2b2b2" strokeWidth="1.3" amp={8} />
      <Lines list={upperBorder} stroke="#999" strokeWidth="2.2" amp={8} />
    </g>
    <g fontFamily="Noto Sans CJK JP, sans-serif" fontSize="25" fill="#8c8c8c">
      <text x="1380" y="846">朝鮮</text>
      <text x="1452" y="1057">韓国</text>
    </g>
    <g transform="translate(1800 800) scale(0.33333)" stroke="#6b6f6f" strokeWidth="1.5" strokeLinejoin="round">
      <g transform="translate(300 -1110)">
        <Regions list={north} amp={3} />
        <Specks points={specks.north} />
      </g>
      <Regions list={central} amp={6} />
      <Specks points={specks.central} />
      <g fill="#4f8f9f" strokeWidth="3">
        <ellipse cx="668" cy="1027" rx="7" ry="9" />
        <circle cx="686" cy="1142" r="6" />
        <path d="M720 1305L736 1318L726 1316Z" />
      </g>
      <g transform="translate(-960 780)">
        <polygon fill="#e4e4e4" stroke="none" points={kochi} />
        <Regions list={west} amp={7} />
        <Specks points={specks.west} rx={4} ry={3} />
      </g>
    </g>
    <g transform="translate(1380 700) scale(0.44643 0.33333)" stroke="#6b6f6f" strokeWidth="3" fill="#bfe4db">
      <path d="M768 1048L778 1040L787 1055L775 1070L766 1062Z" />
      <path d="M740 1090L748 1078L760 1078L755 1092L748 1100Z" fill="#7d8c8a" />
    </g>
    <g transform="translate(1380 1380) scale(0.54847 0.33333)" stroke="#6b6f6f" strokeWidth="1.5">
      <Regions list={southIslands} amp={4} />
      <Specks points={specks.south} rx={2} ry={3} />
      <path d="M1419 570L1421 595M1413 645L1417 670" fill="none" strokeWidth="4" />
    </g>
    <text x="1923" y="1078" fontFamily="Noto Sans CJK JP, sans-serif" fontSize="26" fill="#86b3ab" fillOpacity="0.6">日本</text>
  </svg>
);

const AddSheet = ({ d }) => (
  <Svg w={26} h={26}>
    <path d={d} stroke="#666" />
    <path d={plus(20, 20, 5)} stroke="#333" />
  </Svg>
);

export default function App() {
  return (
    <Desktop>
      <GlobalStyle />
      <Window>
        <TitleBar>
          <Logo mono />
          <span>Tableau Public - ブック1</span>
          <WindowControls>
            <WindowButton aria-label="最小化"><Svg w={18}><path d="M1 9H17" stroke="#222" /></Svg></WindowButton>
            <WindowButton aria-label="最大化"><Svg w={18}><rect x="2" y="2" width="14" height="14" rx="1" stroke="#222" /></Svg></WindowButton>
            <WindowButton aria-label="閉じる"><Svg w={18}><path d="M1 1L17 17M17 1L1 17" stroke="#222" strokeWidth="1.6" /></Svg></WindowButton>
          </WindowControls>
        </TitleBar>
        <MenuBar>
          {menus.map(([name, key]) => (
            <MenuItem key={key}>{name}(<u>{key}</u>)</MenuItem>
          ))}
        </MenuBar>
        <Banner>
          <Megaphone />
          <span>Tableau Desktop Public Edition</span>
          <a href="#buy">Tableau の購入</a>
        </Banner>
        <Toolbar>
          <ToolGroup $pad={11}><Tool aria-label="スタート ページ"><Logo /></Tool></ToolGroup>
          <ToolGroup>
            <Tool aria-label="元に戻す">{icons.back}</Tool>
            <Tool aria-label="やり直し" disabled>{icons.forward}</Tool>
            <Tool $compact aria-label="再生">{icons.redo}</Tool>
            <CaretButton aria-label="再生オプション"><Caret /></CaretButton>
            <Tool aria-label="保存">{icons.save}</Tool>
            <Tool aria-label="新しいデータ ソース">{icons.addData}</Tool>
          </ToolGroup>
          <ToolGroup>
            <Tool $compact aria-label="新しいワークシート">{icons.newSheet}</Tool>
            <CaretButton aria-label="新規オプション"><Caret /></CaretButton>
            <Tool aria-label="複製">{icons.duplicate}</Tool>
            <Tool $compact aria-label="クリア">{icons.clear}</Tool>
            <CaretButton aria-label="クリア オプション"><Caret /></CaretButton>
          </ToolGroup>
          <ToolGroup>
            <Tool aria-label="行と列の交換">{icons.swap}</Tool>
            <Tool aria-label="昇順" disabled>{icons.sortAsc}</Tool>
            <Tool aria-label="降順" disabled>{icons.sortDesc}</Tool>
          </ToolGroup>
          <ToolGroup>
            <Tool $compact aria-label="ハイライト">{icons.highlight}</Tool>
            <CaretButton aria-label="ハイライト オプション"><Caret /></CaretButton>
            <Tool $compact aria-label="グループ" disabled>{icons.clip}</Tool>
            <CaretButton aria-label="グループ オプション" disabled><Caret /></CaretButton>
            <Tool $compact aria-label="マーク ラベル">{icons.label}</Tool>
            <Tool $compact $active aria-label="軸の固定">{icons.pin}</Tool>
            <FitBox>
              <select aria-label="表示サイズ" disabled><option></option></select>
              <Caret />
            </FitBox>
          </ToolGroup>
          <ToolGroup>
            <Tool $compact aria-label="カードの表示">{icons.cards}</Tool>
            <CaretButton aria-label="カード オプション"><Caret /></CaretButton>
            <Tool aria-label="プレゼンテーション">{icons.present}</Tool>
          </ToolGroup>
          <ShowMe>
            <Svg w={22} h={24} stroke="none">
              <path d="M0 0H17V5H0Z" fill="#7f6394" />
              <path d="M0 6H22V11H0Z" fill="#7aa3cc" />
              <path d="M0 13H8V17H0Z" fill="#f3a06a" />
              <path d="M0 19H13V24H0Z" fill="#fa6b78" />
            </Svg>
            表示形式
          </ShowMe>
        </Toolbar>

        <Body>
          <Sidebar>
            <SideTabs>
              <SideTab $current>ダッシュボード</SideTab>
              <SideTab>レイアウト</SideTab>
              <CollapseButton aria-label="閉じる"><Svg w={10} h={16}><path d="M9 1L2 8L9 15" /></Svg></CollapseButton>
            </SideTabs>
            <SideSection $pad="17px 0 20px">
              <PreviewButton>デバイスのプレビュー</PreviewButton>
            </SideSection>
            <SideSection $pad="11px 28px 33px">
              <SizeLabel htmlFor="size">サイズ</SizeLabel>
              <SizeBox>
                <select id="size"><option>最小 420x560 - 最大値 13⋯</option></select>
                <Caret />
              </SizeBox>
            </SideSection>
            <SideSection $grow $pad="12px 0 0">
              <SideHeading $pad="0 28px 20px">シート</SideHeading>
              <ul>
                <SheetRow><SheetIcon />県別_小規模⋯</SheetRow>
                <SheetRow $alt><SheetIcon />県別_小規模⋯</SheetRow>
              </ul>
            </SideSection>
            <SideSection $last $pad="8px 18px 12px 19px">
              <SideHeading $pad="0 0 10px">オブジェクト</SideHeading>
              <ObjectList>
                <ul>
                  {objects.map(([icon, name]) => (
                    <ObjectRow key={icon}><Svg w={21} h={20}>{objectIcons[icon]}</Svg>{name}</ObjectRow>
                  ))}
                </ul>
                <ScrollTrack><Caret up size={12} /><i /><Caret size={12} /></ScrollTrack>
              </ObjectList>
              <Segmented>
                <Segment $on>タイル</Segment>
                <Segment>浮動</Segment>
              </Segmented>
              <CheckLabel><input type="checkbox" />ダッシュボードのタイトルを表示</CheckLabel>
            </SideSection>
          </Sidebar>

          <Work>
            <Board>
              <Zone>
                <SheetTitle $pad="14px 25px 22px">県別_小規模事業者_グラフ</SheetTitle>
                <FieldHeader>都道府.. <SortMark /></FieldHeader>
                <ChartRow>
                  <Plot>
                    {bars.map(([name, value]) => (
                      <BarRow key={name}>
                        <span>{name}</span>
                        <Bar style={{ width: `${(value / axisMax) * 100}%` }} />
                      </BarRow>
                    ))}
                  </Plot>
                  <ChartScroll />
                </ChartRow>
                <Ticks>{tickValues.map((v) => <span key={v}>{v}</span>)}</Ticks>
                <AxisTitle>顧客区分 のカウント <SortMark /></AxisTitle>
              </Zone>
              <MapZone>
                <Grip />
                <ZoneTools>
                  <button aria-label="削除"><Svg w={16}><path d="M1 1L15 15M15 1L1 15" /></Svg></button>
                  <button aria-label="シートに移動"><Svg w={20}><path d="M9 5H2V19H15V11M7 13L17 3M11 2H18V9" /></Svg></button>
                  <button aria-label="フィルター"><Svg w={20}><path d="M1 1H19L12 10V19H8V10Z" strokeWidth="1.8" /></Svg></button>
                  <button aria-label="その他"><Caret size={12} /></button>
                </ZoneTools>
                <SheetTitle $pad="11px 9px 18px">県別_小規模事業者_地図</SheetTitle>
                <MapFrame>
                  <JapanMap />
                  <Attribution>© 2024 Mapbox © OpenStreetMap</Attribution>
                </MapFrame>
              </MapZone>
            </Board>
          </Work>
        </Body>

        <TabStrip>
          <BookTab $min={205} $icon><Svg w={16} h={20}><path d="M3 4V16Q3 18 8 18T13 16V4Q13 2 8 2T3 4Q3 6 8 6T13 4" /></Svg>データ ソース</BookTab>
          <BookTab $min={242}>県別_小規模事業者_グラフ</BookTab>
          <BookTab $min={233}>県別_小規模事業者_地図</BookTab>
          <BookTab $min={170} $current><Svg w={19}><path d="M1 1H18V18H1ZM1 10H18M10 1V18" /></Svg>ダッシュボード 1</BookTab>
          <BookTab $icon aria-label="新しいワークシート"><AddSheet d="M12 20H1V2H21V12M7 15V11M11 15V7M15 15V10" /></BookTab>
          <BookTab $icon aria-label="新しいダッシュボード"><AddSheet d="M12 20H1V2H21V12M1 11H14M11 2V20" /></BookTab>
          <BookTab $icon aria-label="新しいストーリー"><AddSheet d="M11 5Q7 2 1 3V18Q7 17 11 20M11 5Q15 2 21 3V12M11 5V20" /></BookTab>
        </TabStrip>
        <StatusBar>
          <span>45 個のマーク</span>
          <span>1 行  x  1 列</span>
          <span>カウント(顧客区分) の合計: 1,892</span>
          <StatusCells>
            <StatusCell $w={198} />
            <StatusCell $w={43} />
            <StatusCell $w={43} />
            <StatusCell $w={73} />
            <StatusCell $w={210} $pad="0 0 0 10px">
              {["M2 1V11M10 1L4 6L10 11Z", "M9 1L3 6L9 11Z", "M3 1L9 6L3 11Z", "M10 1V11M2 1L8 6L2 11Z"].map((d) => (
                <Svg key={d} w={12} strokeWidth="1.4" color="#aaa"><path d={d} fill="#aaa" /></Svg>
              ))}
              <Svg w={18} h={16} stroke="none"><path d="M0 0h4v4h-4zM7 0h4v4h-4zM14 0h4v4h-4zM0 6h4v4h-4zM7 6h4v4h-4zM14 6h4v4h-4zM0 12h4v4h-4zM7 12h4v4h-4zM14 12h4v4h-4z" fill="#aaa" /></Svg>
              <Svg w={18} h={16} stroke="none"><path d="M0 0h18v10h-18zM0 12h5v4h-5zM7 12h4v4h-4zM13 12h5v4h-5z" fill="#aaa" /></Svg>
              <Svg w={18} h={16} stroke="none"><path d="M0 0h18v16h-18z" fill="#444" /></Svg>
            </StatusCell>
          </StatusCells>
        </StatusBar>
      </Window>
    </Desktop>
  );
}
